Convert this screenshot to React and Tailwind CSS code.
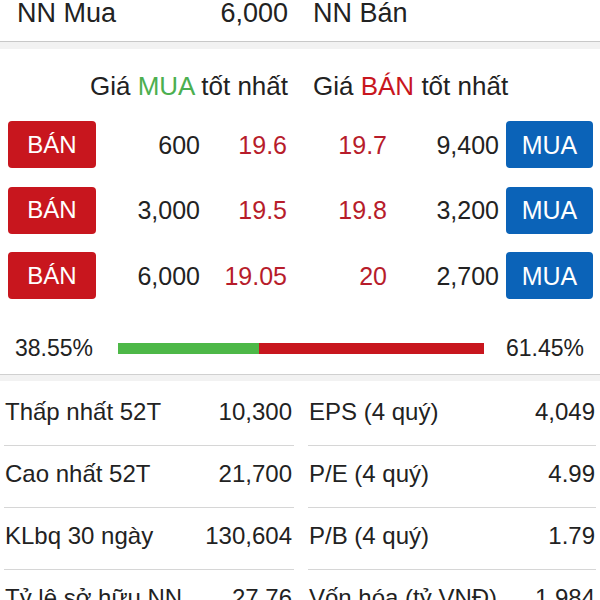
import React from "react";

const orders = [
  { bq: "600", bp: "19.6", sp: "19.7", sq: "9,400" },
  { bq: "3,000", bp: "19.5", sp: "19.8", sq: "3,200" },
  { bq: "6,000", bp: "19.05", sp: "20", sq: "2,700" },
];

const stats = [
  ["Thấp nhất 52T", "10,300", "EPS (4 quý)", "4,049"],
  ["Cao nhất 52T", "21,700", "P/E (4 quý)", "4.99"],
  ["KLbq 30 ngày", "130,604", "P/B (4 quý)", "1.79"],
  ["Tỷ lệ sở hữu NN", "27.76", "Vốn hóa (tỷ VNĐ)", "1,984"],
];

export default function App() {
  return (
    <div
      className="w-[600px] h-[600px] overflow-hidden bg-white text-[#222] text-[24px]"
      style={{ fontFamily: '"Liberation Sans", Arial, sans-serif' }}
    >
      {/* top row */}
      <div className="h-[42px] border-b border-[#c8c8c8] flex items-start text-[27px] leading-[26px]">
        <div className="w-[288px] pl-[17px] flex justify-between">
          <span>NN Mua</span>
          <span>6,000</span>
        </div>
        <div className="ml-[25px]">NN Bán</div>
      </div>
      <div className="h-[7px] bg-[#f2f2f2]" />

      {/* heading */}
      <div className="pt-[22px] flex text-[26px] leading-[30px]">
        <div className="w-[288px] text-right">
          Giá <span className="text-[#4caf50]">MUA</span> tốt nhất
        </div>
        <div className="ml-[25px]">
          Giá <span className="text-[#c8161e]">BÁN</span> tốt nhất
        </div>
      </div>

      {/* orders */}
      <div className="mt-[20px] flex flex-col gap-[18.5px] pl-[8px]">
        {orders.map((o, i) => (
          <div key={i} className="flex items-center h-[47px] text-[25px] leading-[28px]">
            <div className="w-[88px] h-[47px] rounded-[4px] bg-[#c8161e] text-white text-[24px] flex items-center justify-center">
              BÁN
            </div>
            <div className="w-[104px] text-right">{o.bq}</div>
            <div className="w-[87px] text-right text-[#b71c2b]">{o.bp}</div>
            <div className="w-[100px] text-right text-[#b71c2b]">{o.sp}</div>
            <div className="w-[112px] text-right">{o.sq}</div>
            <div className="ml-[7px] w-[87px] h-[47px] rounded-[4px] bg-[#0b63b8] text-white text-[25px] flex items-center justify-center">
              MUA
            </div>
          </div>
        ))}
      </div>

      {/* ratio bar */}
      <div className="pt-[35px] pb-[12px] border-b border-[#d0d0d0]">
        <div className="h-[28px] flex items-center pl-[15px] text-[23px] leading-[28px]">
          <div className="w-[103px]">38.55%</div>
          <div className="w-[366px] h-[11px] flex">
            <div className="h-full bg-[#4db848]" style={{ width: "38.55%" }} />
            <div className="h-full flex-1 bg-[#c8161e]" />
          </div>
          <div className="w-[100px] text-right">61.45%</div>
        </div>
      </div>
      <div className="h-[6px] bg-[#f2f2f2]" />

      {/* stats */}
      <div className="pt-[3px] px-[4px] grid grid-cols-[290px_288px] gap-x-[14px] leading-[28px]">
        {stats.map((r, i) => (
          <React.Fragment key={i}>
            <div className="pt-[14px] pb-[19px] border-b border-[#d6d6d6] flex justify-between pl-[1px] pr-[2px]">
              <span>{r[0]}</span>
              <span>{r[1]}</span>
            </div>
            <div className="pt-[14px] pb-[19px] border-b border-[#d6d6d6] flex justify-between pl-[1px] pr-[1px]">
              <span>{r[2]}</span>
              <span>{r[3]}</span>
            </div>
          </React.Fragment>
        ))}
      </div>
    </div>
  );
}
